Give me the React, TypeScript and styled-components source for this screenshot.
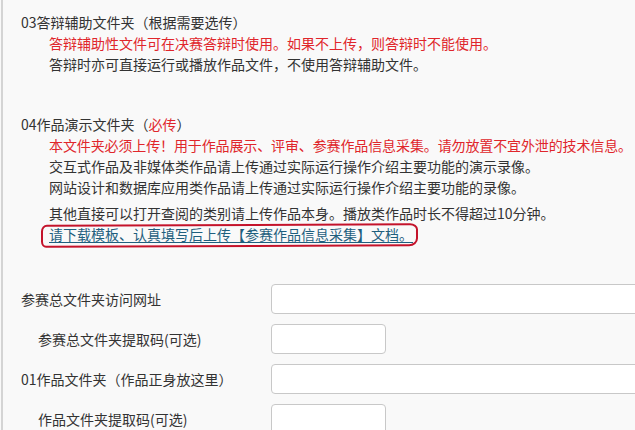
import React from "react";
import styled, { createGlobalStyle } from "styled-components";

const Global = createGlobalStyle`
  html, body {
    margin: 0;
    padding: 0;
    overflow: hidden;
    background: #f9f9f9;
  }
  body {
    font-family: "Microsoft YaHei", "Noto Sans CJK SC", "Noto Sans", sans-serif;
    font-size: 14px;
    color: #333;
  }
`;

const Page = styled.div`
  margin-left: 1px;
  border-left: 2px solid #d4d4d4;
  padding: 12px 0 0 18px;
  min-height: 440px;
  box-sizing: border-box;
`;

const Section = styled.div<{ $gap?: number }>`
  margin-bottom: ${(p) => p.$gap ?? 0}px;
`;

const Line = styled.div<{ $indent?: boolean; $tone?: "red" | "normal"; $space?: number; $tight?: boolean }>`
  line-height: 21px;
  height: 21px;
  white-space: nowrap;
  padding-left: ${(p) => (p.$indent ? 28 : 0)}px;
  margin-top: ${(p) => p.$space ?? 0}px;
  letter-spacing: ${(p) => (p.$tight ? "-0.12px" : "normal")};
  color: ${(p) => (p.$tone === "red" ? "#e0262b" : "#333")};
`;

const Red = styled.span`
  color: #e0262b;
`;

const LinkWrap = styled.span`
  position: relative;
  display: inline-block;
`;

const Link = styled.a`
  color: #1f5f7e;
  text-decoration: underline;
  text-underline-offset: 2px;
`;

const Circle = styled.span`
  position: absolute;
  left: -8px;
  right: -5px;
  top: 0px;
  bottom: -2px;
  border: 2px solid #c4132b;
  border-radius: 6px 8px 9px 5px / 7px 6px 8px 6px;
  pointer-events: none;
  transform: rotate(-0.2deg);
`;

const Form = styled.div`
  margin-top: 39px;
  display: grid;
  grid-template-columns: 250px 1fr;
  row-gap: 10px;
`;

const Label = styled.label<{ $sub?: boolean }>`
  height: 30px;
  line-height: 30px;
  padding-left: ${(p) => (p.$sub ? 17 : 0)}px;
  white-space: nowrap;
  color: #333;
`;

const Input = styled.input<{ $small?: boolean }>`
  box-sizing: border-box;
  height: 30px;
  width: ${(p) => (p.$small ? "115px" : "420px")};
  border: 1px solid #c8c8c8;
  border-radius: 4px;
  background: #fff;
  padding: 0 8px;
  font: inherit;
  outline: none;
`;

export default function App() {
  return (
    <>
      <Global />
      <Page>
        <Section $gap={39}>
          <Line>03答辩辅助文件夹（根据需要选传）</Line>
          <Line $indent $tone="red">
            答辩辅助性文件可在决赛答辩时使用。如果不上传，则答辩时不能使用。
          </Line>
          <Line $indent>答辩时亦可直接运行或播放作品文件，不使用答辩辅助文件。</Line>
        </Section>
        <Section>
          <Line>
            04作品演示文件夹（<Red>必传</Red>）
          </Line>
          <Line $indent $tone="red" $tight>
            本文件夹必须上传！用于作品展示、评审、参赛作品信息采集。请勿放置不宜外泄的技术信息。
          </Line>
          <Line $indent>交互式作品及非媒体类作品请上传通过实际运行操作介绍主要功能的演示录像。</Line>
          <Line $indent>网站设计和数据库应用类作品请上传通过实际运行操作介绍主要功能的录像。</Line>
          <Line $indent $space={5}>
            其他直接可以打开查阅的类别请上传作品本身。播放类作品时长不得超过10分钟。
          </Line>
          <Line $indent>
            <LinkWrap>
              <Link href="#">请下载模板、认真填写后上传【参赛作品信息采集】文档。</Link>
              <Circle />
            </LinkWrap>
          </Line>
        </Section>
        <Form>
          <Label>参赛总文件夹访问网址</Label>
          <div>
            <Input />
          </div>
          <Label $sub>参赛总文件夹提取码(可选)</Label>
          <div>
            <Input $small />
          </div>
          <Label>01作品文件夹（作品正身放这里）</Label>
          <div>
            <Input />
          </div>
          <Label $sub>作品文件夹提取码(可选)</Label>
          <div>
            <Input $small />
          </div>
        </Form>
      </Page>
    </>
  );
}
